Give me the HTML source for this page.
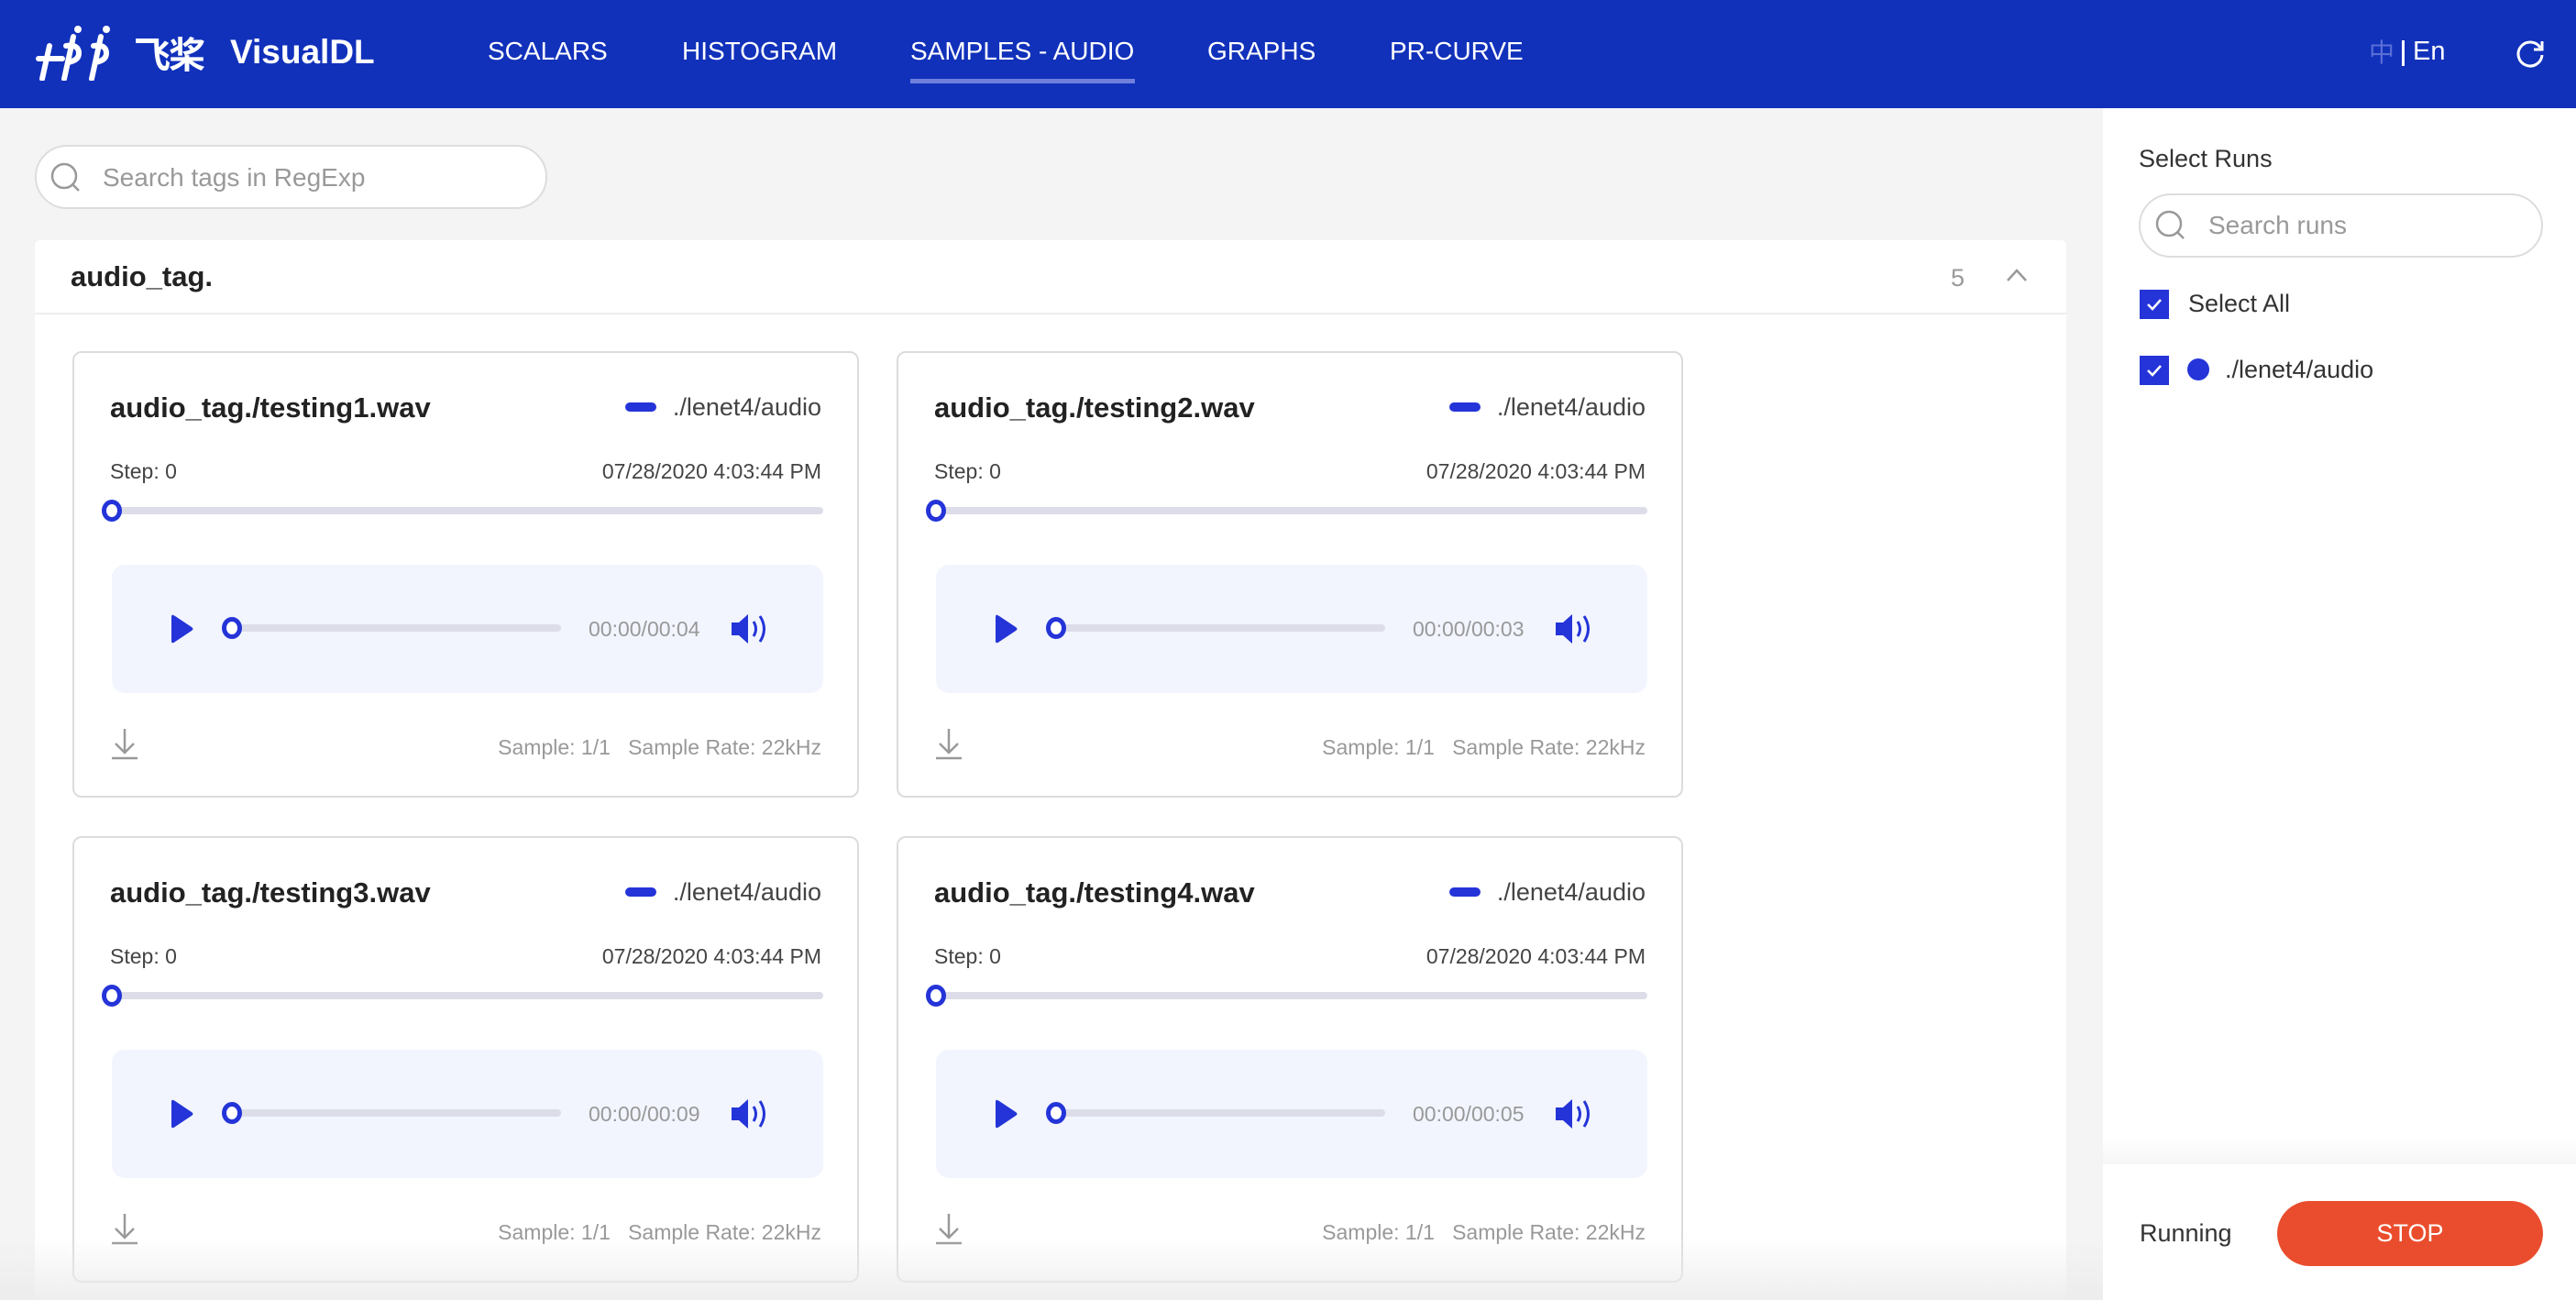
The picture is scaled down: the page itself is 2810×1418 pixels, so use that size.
<!DOCTYPE html>
<html style="overflow:hidden;width:2810px;height:1418px"><head><meta charset="utf-8"><style>
*{margin:0;padding:0;box-sizing:border-box}
body{width:2810px;height:1418px;overflow:hidden;background:#f4f4f4;font-family:"Liberation Sans","Noto Sans CJK SC",sans-serif;position:relative}
.a{position:absolute}
.hdr{left:0;top:0;width:2810px;height:118px;background:#1131bb}
.nav{color:#fff;font-size:28px;top:40px}
.panel{left:38px;top:262px;width:2216px;height:1156px;background:#fff;border-radius:6px 6px 0 0}
.card{width:858px;height:487px;border:2px solid #dcdcdc;border-radius:10px;background:#fff}
.card .t{left:39px;top:42px;font-size:31px;font-weight:bold;color:#222}
.card .run{right:39px;top:44px;font-size:27px;color:#444}
.card .bar{width:34px;height:10px;border-radius:5px;background:#2434d8;display:inline-block;vertical-align:middle;margin-right:18px;position:relative;top:-2px}
.card .st{left:39px;top:116px;font-size:23px;color:#444}
.card .dt{right:39px;top:116px;font-size:23px;color:#444}
.card .trk{left:41px;top:168px;width:776px;height:8px;border-radius:4px;background:#dcdde8}
.thumb{width:22px;height:24px;border:5px solid #2434d8;border-radius:50%;background:#fff}
.card .pl{left:41px;top:231px;width:776px;height:140px;background:#f2f5fe;border-radius:14px}
.card .ft{right:39px;top:417px;font-size:23px;color:#999}
</style></head><body>
<div class="a hdr"></div>
<svg class="a" style="left:38px;top:26px" width="104" height="62" viewBox="0 0 104 62"><g stroke="#fff" stroke-width="6" fill="none" stroke-linecap="round"><path d="M4 38H30M16 24L8 60"/><path d="M32 60L42 14M34 24q14-2 14 8q0 8-12 10"/><path d="M62 60L72 14M64 24q14-2 14 8q0 8-12 10"/></g><circle cx="47" cy="6" r="4" fill="#fff"/><circle cx="78" cy="6" r="4" fill="#fff"/></svg>
<div class="a" style="left:146px;top:28px;color:#fff;font-size:40px;font-weight:bold;font-family:'Noto Sans CJK SC',sans-serif;letter-spacing:-2px">飞桨</div>
<div class="a" style="left:251px;top:36px;color:#fff;font-size:37px;font-weight:bold">VisualDL</div>
<div class="a nav" style="left:532px">SCALARS</div>
<div class="a nav" style="left:744px">HISTOGRAM</div>
<div class="a nav" style="left:993px">SAMPLES - AUDIO</div>
<div class="a" style="left:993px;top:86px;width:245px;height:5px;background:#6f7fdb"></div>
<div class="a nav" style="left:1317px">GRAPHS</div>
<div class="a nav" style="left:1516px">PR-CURVE</div>
<div class="a" style="left:2584px;top:39px;font-size:28px;color:#5a6fd6;font-family:'Noto Sans CJK SC',sans-serif;line-height:34px">中</div>
<div class="a" style="left:2620px;top:44px;width:3px;height:28px;background:#fff"></div>
<div class="a" style="left:2632px;top:40px;font-size:29px;color:#fff">En</div>
<svg class="a" style="left:2744px;top:42px" width="32" height="32" viewBox="0 0 32 32"><path d="M27 10A13 13 0 1 0 29 18" stroke="#fff" stroke-width="3" fill="none"/><path d="M29 3V12H20" stroke="#fff" stroke-width="3" fill="none"/></svg>

<div class="a" style="left:38px;top:158px;width:559px;height:70px;background:#fff;border:2px solid #ddd;border-radius:35px"></div>
<svg class="a" style="left:54px;top:176px" width="36" height="36" viewBox="0 0 36 36"><circle cx="16" cy="16" r="13" stroke="#999" stroke-width="2.5" fill="none"/><path d="M25 25L32 32" stroke="#999" stroke-width="2.5"/></svg>
<div class="a" style="left:112px;top:178px;font-size:28px;color:#999">Search tags in RegExp</div>

<div class="a panel"></div>
<div class="a" style="left:38px;top:341px;width:2216px;height:2px;background:#eee"></div>
<div class="a" style="left:77px;top:284px;font-size:31px;font-weight:bold;color:#222">audio_tag.</div>
<div class="a" style="left:2128px;top:288px;font-size:27px;color:#999">5</div>
<svg class="a" style="left:2188px;top:292px" width="24" height="16" viewBox="0 0 24 16"><path d="M2 14L12 3L22 14" stroke="#999" stroke-width="2.5" fill="none"/></svg>

<div class="a card" style="left:79px;top:383px">
 <div class="a t">audio_tag./testing1.wav</div>
 <div class="a run"><span class="bar"></span>./lenet4/audio</div>
 <div class="a st">Step: 0</div><div class="a dt">07/28/2020 4:03:44 PM</div>
 <div class="a trk"></div><div class="a thumb" style="left:30px;top:160px"></div>
 <div class="a pl">
  <svg class="a" style="left:62px;top:53px" width="28" height="34" viewBox="0 0 28 34"><path d="M3 4Q3 0 7 3L25 15Q28 17 25 19L7 31Q3 34 3 30Z" fill="#2434d8"/></svg>
  <div class="a" style="left:132px;top:65px;width:358px;height:8px;border-radius:4px;background:#dcdde8"></div>
  <div class="a thumb" style="left:120px;top:57px"></div>
  <div class="a" style="left:520px;top:57px;font-size:23px;color:#999">00:00/00:04</div>
  <svg class="a" style="left:674px;top:50px" width="44" height="40" viewBox="0 0 44 40"><path d="M2 13H10L20 4V36L10 27H2Z" fill="#2434d8"/><path d="M26 12Q31 20 26 28M33 6Q42 20 33 34" stroke="#2434d8" stroke-width="3" fill="none"/></svg>
 </div>
 <svg class="a" style="left:39px;top:408px" width="32" height="36" viewBox="0 0 32 36"><path d="M16 2V28M6 18L16 28L26 18M2 34H30" stroke="#999" stroke-width="2.5" fill="none"/></svg>
 <div class="a ft">Sample: 1/1&nbsp;&nbsp;&nbsp;Sample Rate: 22kHz</div>
</div>
<div class="a card" style="left:978px;top:383px">
 <div class="a t">audio_tag./testing2.wav</div>
 <div class="a run"><span class="bar"></span>./lenet4/audio</div>
 <div class="a st">Step: 0</div><div class="a dt">07/28/2020 4:03:44 PM</div>
 <div class="a trk"></div><div class="a thumb" style="left:30px;top:160px"></div>
 <div class="a pl">
  <svg class="a" style="left:62px;top:53px" width="28" height="34" viewBox="0 0 28 34"><path d="M3 4Q3 0 7 3L25 15Q28 17 25 19L7 31Q3 34 3 30Z" fill="#2434d8"/></svg>
  <div class="a" style="left:132px;top:65px;width:358px;height:8px;border-radius:4px;background:#dcdde8"></div>
  <div class="a thumb" style="left:120px;top:57px"></div>
  <div class="a" style="left:520px;top:57px;font-size:23px;color:#999">00:00/00:03</div>
  <svg class="a" style="left:674px;top:50px" width="44" height="40" viewBox="0 0 44 40"><path d="M2 13H10L20 4V36L10 27H2Z" fill="#2434d8"/><path d="M26 12Q31 20 26 28M33 6Q42 20 33 34" stroke="#2434d8" stroke-width="3" fill="none"/></svg>
 </div>
 <svg class="a" style="left:39px;top:408px" width="32" height="36" viewBox="0 0 32 36"><path d="M16 2V28M6 18L16 28L26 18M2 34H30" stroke="#999" stroke-width="2.5" fill="none"/></svg>
 <div class="a ft">Sample: 1/1&nbsp;&nbsp;&nbsp;Sample Rate: 22kHz</div>
</div>
<div class="a card" style="left:79px;top:912px">
 <div class="a t">audio_tag./testing3.wav</div>
 <div class="a run"><span class="bar"></span>./lenet4/audio</div>
 <div class="a st">Step: 0</div><div class="a dt">07/28/2020 4:03:44 PM</div>
 <div class="a trk"></div><div class="a thumb" style="left:30px;top:160px"></div>
 <div class="a pl">
  <svg class="a" style="left:62px;top:53px" width="28" height="34" viewBox="0 0 28 34"><path d="M3 4Q3 0 7 3L25 15Q28 17 25 19L7 31Q3 34 3 30Z" fill="#2434d8"/></svg>
  <div class="a" style="left:132px;top:65px;width:358px;height:8px;border-radius:4px;background:#dcdde8"></div>
  <div class="a thumb" style="left:120px;top:57px"></div>
  <div class="a" style="left:520px;top:57px;font-size:23px;color:#999">00:00/00:09</div>
  <svg class="a" style="left:674px;top:50px" width="44" height="40" viewBox="0 0 44 40"><path d="M2 13H10L20 4V36L10 27H2Z" fill="#2434d8"/><path d="M26 12Q31 20 26 28M33 6Q42 20 33 34" stroke="#2434d8" stroke-width="3" fill="none"/></svg>
 </div>
 <svg class="a" style="left:39px;top:408px" width="32" height="36" viewBox="0 0 32 36"><path d="M16 2V28M6 18L16 28L26 18M2 34H30" stroke="#999" stroke-width="2.5" fill="none"/></svg>
 <div class="a ft">Sample: 1/1&nbsp;&nbsp;&nbsp;Sample Rate: 22kHz</div>
</div>
<div class="a card" style="left:978px;top:912px">
 <div class="a t">audio_tag./testing4.wav</div>
 <div class="a run"><span class="bar"></span>./lenet4/audio</div>
 <div class="a st">Step: 0</div><div class="a dt">07/28/2020 4:03:44 PM</div>
 <div class="a trk"></div><div class="a thumb" style="left:30px;top:160px"></div>
 <div class="a pl">
  <svg class="a" style="left:62px;top:53px" width="28" height="34" viewBox="0 0 28 34"><path d="M3 4Q3 0 7 3L25 15Q28 17 25 19L7 31Q3 34 3 30Z" fill="#2434d8"/></svg>
  <div class="a" style="left:132px;top:65px;width:358px;height:8px;border-radius:4px;background:#dcdde8"></div>
  <div class="a thumb" style="left:120px;top:57px"></div>
  <div class="a" style="left:520px;top:57px;font-size:23px;color:#999">00:00/00:05</div>
  <svg class="a" style="left:674px;top:50px" width="44" height="40" viewBox="0 0 44 40"><path d="M2 13H10L20 4V36L10 27H2Z" fill="#2434d8"/><path d="M26 12Q31 20 26 28M33 6Q42 20 33 34" stroke="#2434d8" stroke-width="3" fill="none"/></svg>
 </div>
 <svg class="a" style="left:39px;top:408px" width="32" height="36" viewBox="0 0 32 36"><path d="M16 2V28M6 18L16 28L26 18M2 34H30" stroke="#999" stroke-width="2.5" fill="none"/></svg>
 <div class="a ft">Sample: 1/1&nbsp;&nbsp;&nbsp;Sample Rate: 22kHz</div>
</div>
<div class="a" style="left:0;top:1350px;width:2294px;height:68px;background:linear-gradient(rgba(240,240,240,0),rgba(236,236,236,0.9))"></div>

<div class="a" style="left:2294px;top:118px;width:516px;height:1300px;background:#fff"></div>
<div class="a" style="left:2333px;top:158px;font-size:27px;color:#333">Select Runs</div>
<div class="a" style="left:2333px;top:211px;width:441px;height:70px;border:2px solid #ddd;border-radius:35px"></div>
<svg class="a" style="left:2350px;top:228px" width="36" height="36" viewBox="0 0 36 36"><circle cx="16" cy="16" r="13" stroke="#999" stroke-width="2.5" fill="none"/><path d="M25 25L32 32" stroke="#999" stroke-width="2.5"/></svg>
<div class="a" style="left:2409px;top:230px;font-size:28px;color:#999">Search runs</div>
<div class="a" style="left:2334px;top:316px;width:32px;height:32px;background:#2434d8"></div>
<svg class="a" style="left:2334px;top:316px" width="32" height="32" viewBox="0 0 32 32"><path d="M9 16L14 21L23 11" stroke="#fff" stroke-width="2.5" fill="none"/></svg>
<div class="a" style="left:2387px;top:316px;font-size:27px;color:#333">Select All</div>
<div class="a" style="left:2334px;top:388px;width:32px;height:32px;background:#2434d8"></div>
<svg class="a" style="left:2334px;top:388px" width="32" height="32" viewBox="0 0 32 32"><path d="M9 16L14 21L23 11" stroke="#fff" stroke-width="2.5" fill="none"/></svg>
<div class="a" style="left:2386px;top:391px;width:24px;height:24px;border-radius:50%;background:#2434d8"></div>
<div class="a" style="left:2427px;top:388px;font-size:27px;color:#333">./lenet4/audio</div>
<div class="a" style="left:2294px;top:1240px;width:516px;height:30px;background:linear-gradient(#fff,#f6f6f6)"></div>
<div class="a" style="left:2334px;top:1330px;font-size:27px;color:#333">Running</div>
<div class="a" style="left:2484px;top:1310px;width:290px;height:71px;border-radius:36px;background:#ea4d2d;color:#fff;font-size:27px;text-align:center;line-height:71px">STOP</div>
</body></html>
